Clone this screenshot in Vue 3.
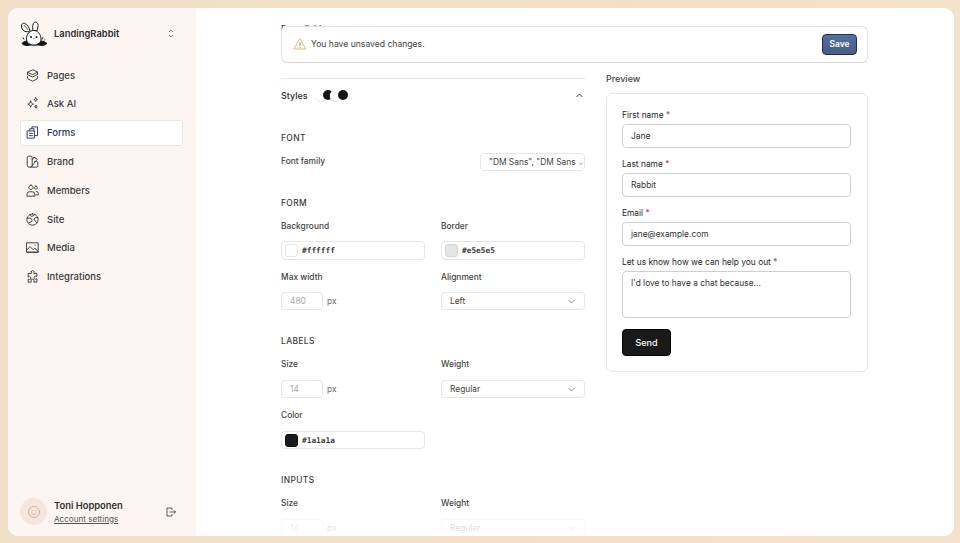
<script setup>
const nav = [
  { label: 'Pages', paths: ['M12 3 4 6.800l8 3.800 8-3.800z', 'M4 10.500l8 3.800 8-3.800', 'M4 13.800v3.400l8 3.800 8-3.800v-3.400', 'M4 6.800v3.700M20 6.800v3.700'] },
  { label: 'Ask AI', paths: ['M9 8c.6 3 1.600 4.400 4.500 5-2.900.6-3.900 2-4.500 5-.6-3-1.600-4.400-4.500-5C7.400 12.400 8.400 11 9 8z', 'M17 3c.3 1.700 1 2.500 2.800 2.800C18 6.200 17.300 7 17 8.700 16.700 7 16 6.200 14.200 5.800 16 5.500 16.700 4.700 17 3z', 'M17.500 15c.3 1.400.8 2 2.300 2.300-1.500.3-2 .9-2.300 2.300-.3-1.400-.8-2-2.300-2.300 1.500-.3 2-.9 2.300-2.300z'] },
  { label: 'Forms', active: true, paths: ['M4 9.500h11v11.500H4z', 'M7.500 9.500V6h7v3.500', 'M11 6V3h9v14h-5', 'M7 13.500h5M7 17h5'] },
  { label: 'Brand', paths: ['M3.500 6a2.500 2.500 0 0 1 2.500-2.500h3A2.500 2.500 0 0 1 11.500 6v12a3 3 0 0 1-3 3h-2a3 3 0 0 1-3-3z', 'M11.500 9l3-4 5 3.500-8 10.500', 'M9 21h9.500a2 2 0 0 0 2-2v-5a2 2 0 0 0-2-2h-3'] },
  { label: 'Members', paths: ['M9.500 3.500a3.500 3.500 0 1 0 .01 0z', 'M3 20.500v-2a4.500 4.500 0 0 1 4.500-4.500h4a4.500 4.500 0 0 1 4.500 4.500v2z', 'M17.500 5a2.500 2.500 0 1 0 .01 0z', 'M18 13.500a3.500 3.500 0 0 1 3.500 3.500v2H18'] },
  { label: 'Site', paths: ['M12 3a9 9 0 1 0 .01 0z', 'M3.500 10h6l2 3-2 3-3 1', 'M20.500 9h-4l-2 2.500 2 3 2.500 3', 'M8 4l2 3 4-1 1-2.500'] },
  { label: 'Media', paths: ['M3 4.500h18v15H3z', 'M3 16l5-5.500 5 5 2.500-2.500 5.500 5', 'M16 8.500h.5', 'M3 19.500h18'] },
  { label: 'Integrations', paths: ['M10 4.500a2.300 2.300 0 0 1 4.500 0c0 1-.4 1.500-.4 2.500H19v5c-1 0-1.500-.4-2.300-.4a2.300 2.300 0 0 0 0 4.600c.8 0 1.300-.4 2.300-.4V21h-5c0-1 .4-1.500.4-2.300a2.300 2.300 0 0 0-4.600 0c0 .8.4 1.300.4 2.300H5v-4.500c1 0 1.500.4 2.200.4a2.300 2.300 0 0 0 0-4.600c-.7 0-1.200.4-2.200.4V7h5.400c0-1-.4-1.500-.4-2.500z'] },
]
const required = [
  { label: 'First name', value: 'Jane' },
  { label: 'Last name', value: 'Rabbit' },
  { label: 'Email', value: 'jane@example.com' },
]
</script>

<template>
  <div class="page">
    <div class="window">
      <aside class="sidebar">
        <div class="brand">
          <svg class="logo" viewBox="0 0 28 28" width="28" height="28" fill="#fff" stroke="#1a1a1a" stroke-width="1">
            <path d="M2 23.500c1-2 5-3 8-2.500h8c3-.5 7 .5 9 2.500-2 2-6 2.500-8 1.500H10c-2 1-7 .5-8-1.500z" fill="#111" />
            <path d="M8.500 11.500C5 12.500 2 10 1.500 7 1 4 3 2.500 5 3.500c2.500 1.200 4.500 4.500 5 7.500z" />
            <path d="M4 5.500c1.600.8 3 2.800 3.500 4.500" stroke-width=".7" />
            <path d="M13 10.500c-.8-3.500-.3-7 1.500-8.200C16.500 1.200 18.300 3 18 6.500c-.2 2-.8 3.500-1.300 4.500z" />
            <path d="M6.500 19c0-5 3-8.500 7-8.500s7.500 3.500 7.500 8.500c0 3.500-3 6-7.200 6S6.500 22.500 6.500 19z" />
            <circle cx="11" cy="17" r="1" fill="#111" stroke="none" />
            <circle cx="16.500" cy="17" r="1" fill="#111" stroke="none" />
            <path d="M13 18.500h1.500l-.75 1z" fill="#111" stroke="none" />
            <path d="M3 17.500l1 2M23 17l-1 2.500M25 19.500l-.8 1" stroke-width=".9" />
          </svg>
          <span class="brand-name">LandingRabbit</span>
          <svg class="updown" viewBox="0 0 8 12" width="6" height="9" fill="none" stroke="#555" stroke-width="1">
            <path d="M1.500 4 4 1.500 6.500 4M1.500 8 4 10.500 6.500 8" />
          </svg>
        </div>

        <nav class="nav">
          <a v-for="item in nav" :key="item.label" class="nav-item" :class="{ active: item.active }">
            <svg viewBox="0 0 24 24" width="15" height="15" fill="none" stroke="currentColor" stroke-width="1.500" stroke-linejoin="round" stroke-linecap="round">
              <path v-for="d in item.paths" :key="d" :d="d" />
            </svg>
            <span>{{ item.label }}</span>
          </a>
        </nav>

        <div class="account">
          <div class="avatar">
            <svg viewBox="0 0 24 24" width="14" height="14" fill="none" stroke="#b6a69c" stroke-width="1.300" stroke-linecap="round">
              <circle cx="12" cy="12" r="9.500" />
              <path d="M8 14.500c1.800 2.400 6.200 2.400 8 0M9 9.500v.5M15 9.500v.5" />
            </svg>
          </div>
          <div class="who">
            <strong>Toni Hopponen</strong>
            <a>Account settings</a>
          </div>
          <svg class="logout" viewBox="0 0 24 24" width="12" height="12" fill="none" stroke="#4a4a4a" stroke-width="1.800" stroke-linecap="round" stroke-linejoin="round">
            <path d="M14 7V4H4v16h10v-3M10 12h11M18 9l3 3-3 3" />
          </svg>
        </div>
      </aside>

      <main class="main">
        <div class="peek">Form fields</div>

        <div class="banner">
          <svg viewBox="0 0 24 24" width="14" height="14" fill="none" stroke="#d9bc5a" stroke-width="1.600" stroke-linejoin="round" stroke-linecap="round">
            <path d="M12 3.500 22 20.500H2z" />
            <path d="M12 10v4.500M12 17.500v.2" stroke="#8a7a3a" />
          </svg>
          <span class="banner-text">You have unsaved changes.</span>
          <button class="save">Save</button>
        </div>

        <div class="columns">
          <section class="settings">
            <div class="styles-row">
              <span>Styles</span>
              <span class="dots"><i class="dot light"></i><i class="dot dark"></i><i class="dot light"></i><i class="dot dark"></i></span>
              <svg class="up" viewBox="0 0 12 12" width="9" height="9" fill="none" stroke="#333" stroke-width="1.200"><path d="M2 8l4-4 4 4" /></svg>
            </div>

            <h3 class="first">FONT</h3>
            <div class="font-row">
              <label>Font family</label>
              <div class="font-select">"DM Sans", "DM Sans <span>⌄</span></div>
            </div>

            <h3>FORM</h3>
            <div class="grid">
              <div class="field">
                <label>Background</label>
                <div class="color"><i class="swatch white"></i><span>#ffffff</span></div>
              </div>
              <div class="field">
                <label>Border</label>
                <div class="color"><i class="swatch grey"></i><span>#e5e5e5</span></div>
              </div>
              <div class="field">
                <label>Max width</label>
                <div class="num"><div class="num-box">480</div><span>px</span></div>
              </div>
              <div class="field">
                <label>Alignment</label>
                <div class="select">Left<svg viewBox="0 0 12 12" width="9" height="9" fill="none" stroke="#666" stroke-width="1"><path d="M2 4l4 4 4-4" /></svg></div>
              </div>
            </div>

            <h3 class="after">LABELS</h3>
            <div class="grid">
              <div class="field">
                <label>Size</label>
                <div class="num"><div class="num-box">14</div><span>px</span></div>
              </div>
              <div class="field">
                <label>Weight</label>
                <div class="select">Regular<svg viewBox="0 0 12 12" width="9" height="9" fill="none" stroke="#666" stroke-width="1"><path d="M2 4l4 4 4-4" /></svg></div>
              </div>
              <div class="field">
                <label>Color</label>
                <div class="color"><i class="swatch black"></i><span>#1a1a1a</span></div>
              </div>
            </div>

            <h3 class="after">INPUTS</h3>
            <div class="grid">
              <div class="field">
                <label>Size</label>
                <div class="num"><div class="num-box">14</div><span>px</span></div>
              </div>
              <div class="field">
                <label>Weight</label>
                <div class="select">Regular<svg viewBox="0 0 12 12" width="9" height="9" fill="none" stroke="#666" stroke-width="1"><path d="M2 4l4 4 4-4" /></svg></div>
              </div>
            </div>
          </section>

          <section class="preview">
            <div class="preview-title">Preview</div>
            <div class="card">
              <div v-for="f in required" :key="f.label" class="p-field">
                <label>{{ f.label }} <em>*</em></label>
                <div class="p-input">{{ f.value }}</div>
              </div>
              <div class="p-field">
                <label>Let us know how we can help you out <em>*</em></label>
                <div class="p-input area">I'd love to have a chat because...</div>
              </div>
              <button class="send">Send</button>
            </div>
          </section>
        </div>

        <div class="fade"></div>
      </main>
    </div>
  </div>
</template>

<style>
html, body { margin: 0; height: 100%; overflow: hidden; }
</style>

<style scoped>
.page {
  width: 960px;
  height: 543px;
  box-sizing: border-box;
  padding: 8px 6px 7px 8px;
  background: linear-gradient(100deg, #f0e0c8, #f3dfc7 60%, #f5e2cc);
  font-family: Inter, "Liberation Sans", sans-serif;
  color: #2e2e2e;
}
.window {
  display: flex;
  height: 528px;
  border-radius: 10px;
  overflow: hidden;
  background: #fff;
}
.sidebar {
  width: 188px;
  flex: none;
  box-sizing: border-box;
  padding: 12px 13px 11px 12px;
  background: #fdf5f1;
  display: flex;
  flex-direction: column;
}
.brand {
  display: flex;
  align-items: center;
  height: 27px;
}
.logo { flex: none; }
.brand-name {
  margin-left: 6px;
  font-size: 9.400px;
  font-weight: 600;
}
.updown { margin-left: auto; margin-right: 9px; }
.nav {
  margin-top: 15px;
  display: flex;
  flex-direction: column;
  gap: 2.400px;
  margin-bottom: auto;
}
.nav-item {
  display: flex;
  align-items: center;
  gap: 7px;
  height: 26.400px;
  box-sizing: border-box;
  padding-left: 4px;
  font-size: 9.500px;
  font-weight: 500;
  color: #3a3a3a;
  border: 1px solid transparent;
}
.nav-item.active {
  background: #fff;
  border-color: #e9e5e3;
  border-radius: 3px;
  color: #24395f;
}
.account {
  display: flex;
  align-items: center;
}
.avatar {
  width: 27px;
  height: 27px;
  border-radius: 50%;
  background: #f6e6de;
  display: flex;
  align-items: center;
  justify-content: center;
}
.who {
  margin-left: 7px;
  display: flex;
  flex-direction: column;
  gap: 2px;
  font-size: 9.400px;
}
.who strong { font-weight: 600; line-height: 12px; }
.who a { font-size: 8.100px; line-height: 10px; text-decoration: underline; color: #555; }
.logout { margin-left: auto; margin-right: 6px; }

.main {
  position: relative;
  flex: 1;
  overflow: hidden;
  padding: 16px 86px 0 85px;
  min-width: 0;
}
.peek {
  font-size: 8.400px;
  line-height: 11px;
  height: 11px;
  overflow: hidden;
  font-weight: 500;
}
.banner {
  position: absolute;
  z-index: 2;
  top: 18px;
  left: 85px;
  right: 86px;
  height: 37px;
  box-sizing: border-box;
  display: flex;
  align-items: center;
  gap: 4px;
  padding: 0 10px 1px 11px;
  background: #fff;
  border: 1px solid #e3e3e3;
  border-bottom-color: #d6d6d6;
  border-radius: 6px;
}
.banner-text { font-size: 8.600px; color: #444; }
.save {
  margin-left: auto;
  width: 35px;
  height: 21px;
  padding: 0;
  border: 1px solid #1d3153;
  border-radius: 4px;
  background: linear-gradient(#56709b, #465d85);
  color: #fff;
  font: 600 8.400px Inter, "Liberation Sans", sans-serif;
}
.columns {
  margin-top: 43px;
  display: grid;
  grid-template-columns: 304px 262px;
  gap: 21px;
  align-items: start;
}
.settings { min-width: 0; }
.styles-row {
  display: flex;
  align-items: center;
  height: 33px;
  border-top: 1px solid #e9e9e9;
  font-size: 9px;
  font-weight: 500;
}
.dots { display: flex; margin-left: 7px; }
.dot {
  width: 11px;
  height: 11px;
  border-radius: 50%;
  margin-right: -3px;
}
.dot.light { background: #fff; box-shadow: 0 1px 1px #e6e6e6; }
.dot.dark { background: #161616; width: 10px; height: 10px; }
.up { margin-left: auto; margin-right: 1px; }
h3 {
  margin: 25.800px 0 0;
  height: 12px;
  line-height: 12px;
  font-size: 8.400px;
  font-weight: 500;
  letter-spacing: .4px;
  color: #3a3a3a;
}
h3.first { margin-top: 19.500px; }
h3.after { margin-top: 25px; }
label {
  display: block;
  font-size: 8.400px;
  font-weight: 500;
  color: #444;
  line-height: 11px;
}
.font-row {
  margin-top: 9px;
  display: flex;
  align-items: center;
  justify-content: space-between;
}
.font-row label { margin-top: -1px; }
.font-select {
  width: 105px;
  height: 18.400px;
  box-sizing: border-box;
  border: 1px solid #e6e6e6;
  border-radius: 4px;
  padding-left: 8px;
  font-size: 8.400px;
  line-height: 16.400px;
  color: #444;
  white-space: nowrap;
  overflow: hidden;
}
.font-select span { color: #999; font-size: 7px; }
.grid {
  margin-top: 12px;
  display: grid;
  grid-template-columns: 144px 144px;
  column-gap: 16px;
  row-gap: 12px;
}
.field label { margin-bottom: 9.500px; }
.color {
  height: 18.400px;
  box-sizing: border-box;
  border: 1px solid #e6e6e6;
  border-radius: 4px;
  display: flex;
  align-items: center;
  padding-left: 3px;
  gap: 4px;
  font: 700 7.800px "DejaVu Sans Mono", "Liberation Mono", monospace;
  color: #3c3c3c;
}
.swatch {
  width: 13px;
  height: 13px;
  box-sizing: border-box;
  border-radius: 3px;
  border: 1px solid #e5e5e5;
}
.swatch.grey { background: #e5e5e5; border-color: #d4d4d4; }
.swatch.black { background: #1a1a1a; border-color: #0c0c0c; }
.num {
  display: flex;
  align-items: center;
  gap: 4px;
  font-size: 8.400px;
  color: #666;
}
.num-box {
  width: 42px;
  height: 18.400px;
  box-sizing: border-box;
  border: 1px solid #e6e6e6;
  border-radius: 4px;
  padding-left: 8px;
  line-height: 16.400px;
  color: #aaa;
}
.select {
  height: 18.400px;
  box-sizing: border-box;
  border: 1px solid #e6e6e6;
  border-radius: 4px;
  padding: 0 8px;
  display: flex;
  align-items: center;
  justify-content: space-between;
  font-size: 8.400px;
  color: #444;
}
.preview-title {
  font-size: 9px;
  font-weight: 500;
  color: #444;
  height: 20px;
  line-height: 11px;
  margin-top: -5px;
}
.card {
  height: 279px;
  box-sizing: border-box;
  border: 1px solid #e6e6e6;
  border-radius: 6px;
  padding: 15.500px 16px 15px 15px;
  font-family: Inter, "Liberation Sans", sans-serif;
}
.p-field { margin-bottom: 10.500px; }
.p-field label {
  font-size: 8.400px;
  font-weight: 400;
  line-height: 11px;
  margin: 0 0 3.500px;
  color: #1f1f1f;
}
.p-field em { color: #c2344d; font-style: normal; }
.p-input {
  height: 24px;
  box-sizing: border-box;
  border: 1px solid #cfcfcf;
  border-radius: 4px;
  padding-left: 8px;
  font-size: 8.400px;
  line-height: 22px;
  color: #333;
}
.p-input.area { height: 47px; }
.send {
  margin-top: .5px;
  width: 49px;
  height: 27px;
  border: 1px solid #000;
  border-radius: 4px;
  background: #1a1a1a;
  color: #fff;
  font: 500 9px Inter, "Liberation Sans", sans-serif;
  padding: 0;
}
.fade {
  position: absolute;
  left: 0;
  right: 0;
  bottom: 0;
  height: 26px;
  background: linear-gradient(rgba(255,255,255,0), rgba(255,255,255,.7) 30%, rgba(255,255,255,.9));
  pointer-events: none;
}
</style>
